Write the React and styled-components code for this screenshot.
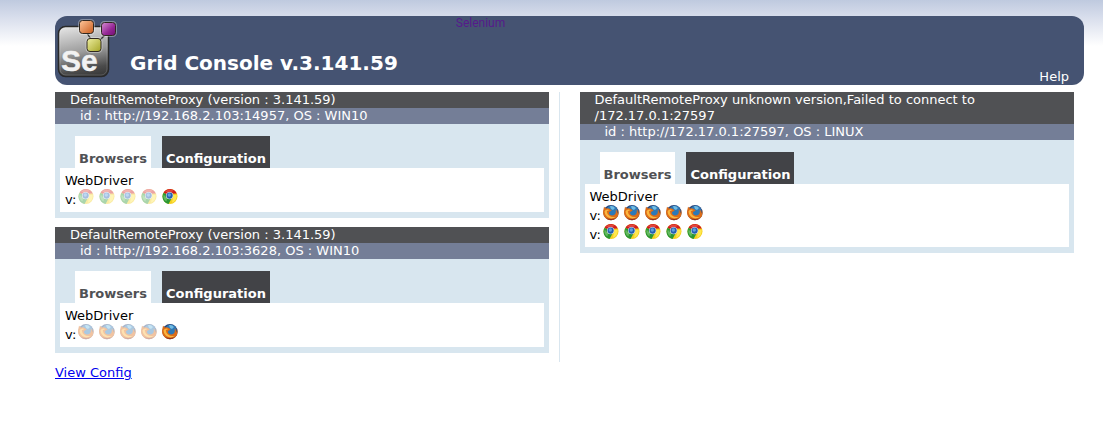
import React from "react";
import styled, { createGlobalStyle, css } from "styled-components";

const GlobalStyle = createGlobalStyle`
  * { box-sizing: border-box; }
  body {
    margin: 0;
    color: #000;
    background: #fff linear-gradient(to bottom, #bfcadf 0, #d6dceb 16px, #fff 46px) no-repeat;
    font: 13px/16px Verdana, "DejaVu Sans", sans-serif;
  }
`;

const Page = styled.div`
  padding: 16px 19px 0 55px;
`;

const Header = styled.header`
  display: flex;
  align-items: flex-start;
  height: 69px;
  padding-right: 15px;
  border-radius: 12px;
  background: #455372;
  color: #fff;
`;

const Title = styled.h1`
  margin: 34px 0 0 13px;
  font-size: 20px;
  line-height: 26px;
  white-space: nowrap;
`;

const BrandLink = styled.a`
  margin-left: 58px;
  color: #551a8b;
  font: 12px/14px Roboto, sans-serif;
  text-decoration: none;
`;

const HelpLink = styled.a`
  align-self: flex-end;
  margin-left: auto;
  color: #fff;
  text-decoration: none;
`;

const Columns = styled.main`
  display: grid;
  grid-template-columns: 1fr 1fr;
  gap: 20px;
  margin-top: 7px;
`;

const Column = styled.div`
  padding-right: 10px;
  ${(p) => p.$divided && css`border-right: 1px solid #d9e6ef;`}
`;

const Proxy = styled.section`
  margin-bottom: 9px;
  padding-bottom: 6px;
  background: #d8e6ef;
`;

const ProxyName = styled.h2`
  margin: 0;
  padding: 0 15px;
  background: #505154;
  color: #fff;
  font-size: 13px;
  font-weight: normal;
`;

const ProxyId = styled.p`
  margin: 0;
  padding: 0 25px;
  background: #747e97;
  color: #fff;
`;

const Tabs = styled.div`
  display: flex;
  gap: 11px;
  padding: 12px 20px 0;
`;

const Tab = styled.button`
  height: 32px;
  padding: 14px 4px 0;
  border: 0;
  background: ${(p) => (p.$active ? "#fff" : "#424347")};
  color: ${(p) => (p.$active ? "#505154" : "#fff")};
  font: bold 13px/16px Verdana, "DejaVu Sans", sans-serif;
`;

const Panel = styled.div`
  margin: 0 5px;
  padding: 4px 5px;
  background: #fff;
`;

const Protocol = styled.p`
  margin: 0;
  line-height: 17px;
`;

const Slots = styled.div`
  display: flex;
  gap: 5px;
  height: 19px;
`;

const Version = styled.span`
  margin-right: -3px;
  padding-top: 3px;
`;

const Icon = styled.svg`
  flex: none;
  width: 16px;
  height: 16px;
  opacity: ${(p) => (p.$busy ? 0.4 : 1)};
`;

const Logo = styled.svg`
  flex: none;
  width: 62px;
  height: 62px;
`;

const ConfigLink = styled.a`
  display: inline-block;
  margin-top: 3px;
  color: #0000ee;
`;

function SeleniumLogo() {
  return (
    <Logo viewBox="0 0 62 62" aria-hidden="true">
      <defs>
        <linearGradient id="tile" x1="0.4" y1="0" x2="0.6" y2="1">
          <stop offset="0" stopColor="#dedede" />
          <stop offset="0.5" stopColor="#9b9b9b" />
          <stop offset="0.85" stopColor="#4b4b4b" />
          <stop offset="1" stopColor="#3a3a3a" />
        </linearGradient>
        <linearGradient id="orange" x1="0" y1="0" x2="1" y2="1">
          <stop offset="0" stopColor="#ffc79b" />
          <stop offset="1" stopColor="#c85b1c" />
        </linearGradient>
        <linearGradient id="purple" x1="0" y1="0" x2="1" y2="1">
          <stop offset="0" stopColor="#d691d4" />
          <stop offset="0.6" stopColor="#942594" />
          <stop offset="1" stopColor="#701070" />
        </linearGradient>
        <linearGradient id="yellow" x1="0" y1="0" x2="1" y2="1">
          <stop offset="0" stopColor="#eeeea0" />
          <stop offset="1" stopColor="#a5a526" />
        </linearGradient>
      </defs>
      <rect x="3.5" y="10.5" width="50" height="50" rx="7" fill="url(#tile)" stroke="#292929" strokeWidth="1.5" />
      <rect x="5" y="12" width="47" height="47" rx="6" fill="none" stroke="#fff" strokeOpacity="0.15" />
      <path d="M32 17l5 8M51 18l-7 7" fill="none" stroke="#333" strokeWidth="1.4" />
      <text x="6" y="54.5" fill="#f2f2f2" stroke="#f2f2f2" strokeWidth="0.4" fontFamily="Liberation Sans, Arial, sans-serif" fontWeight="bold" fontSize="30">Se</text>
      <g stroke="#fff" strokeOpacity="0.35" strokeWidth="3" fill="none">
        <rect x="24.5" y="4.5" width="14" height="13" rx="3" />
        <rect x="46.5" y="6.5" width="14" height="13" rx="3" />
        <rect x="32" y="22.5" width="14" height="13" rx="3" />
      </g>
      <g stroke="#302820">
        <rect x="24.5" y="4.5" width="14" height="13" rx="3" fill="url(#orange)" />
        <rect x="46.5" y="6.5" width="14" height="13" rx="3" fill="url(#purple)" />
        <rect x="32" y="22.5" width="14" height="13" rx="3" fill="url(#yellow)" />
      </g>
    </Logo>
  );
}

function ChromeIcon({ busy }) {
  return (
    <Icon viewBox="0 0 16 16" $busy={busy} role="img" aria-label="chrome">
      <circle cx="8" cy="7.5" r="7.5" fill="#f5cf20" />
      <path d="M7.500 7L1.500 3.700A7.500 7.500 0 0 1 14.800 4.600L8 4.800Z" fill="#cf1b1b" />
      <path d="M3 3A6 6 0 0 1 12 2L8 3.200Z" fill="#ec6259" opacity="0.6" />
      <path d="M7.500 7L1.500 3.700A7.500 7.500 0 0 0 6.600 14.900L9.500 9.500Z" fill="#2b9732" />
      <path d="M1.600 5.500A6.500 6.500 0 0 0 4.500 12.500L5 9Z" fill="#8bd07c" opacity="0.6" />
      <path d="M11.500 6L14.600 6A7 7 0 0 1 10 13.800Z" fill="#ffe84e" />
      <circle cx="7.600" cy="6.600" r="3.700" fill="#dfe7ee" />
      <circle cx="7.600" cy="6.600" r="3.100" fill="#235fae" />
      <circle cx="7.300" cy="6" r="1.700" fill="#5da0df" />
    </Icon>
  );
}

function FirefoxIcon({ busy }) {
  return (
    <Icon viewBox="0 0 16 16" $busy={busy} role="img" aria-label="firefox">
      <circle cx="8" cy="7.700" r="7.600" fill="#2a4478" />
      <circle cx="8.800" cy="6" r="5.500" fill="#2c79b8" />
      <path d="M7 1.200Q10 .6 12 3L10 5L8 4Z" fill="#72bce2" />
      <path d="M1 1.800L3 3.500Q5 2.900 6.800 4.100L8.700 5.500L6.200 6.900Q5.500 8.800 7.200 10Q9.500 11.200 11.800 9.500Q13.500 7.800 12.500 4.300Q14.500 6 14.100 8.500Q15 7 14.800 4.200Q17 9.800 13.200 13.300Q8.500 16.900 3.700 13.900Q-1 10.500 .3 5.300Z" fill="#dc6c18" />
      <path d="M1.500 6.500Q2 11 5.800 12.800Q9.500 14.400 13 11.700Q9 12.900 6 10.400Q4 8.700 3.800 6.200L6.500 5Q3 3.500 1.500 6.500Z" fill="#fbb63e" />
      <path d="M3 13.200Q8 16.700 13 13.200Q8 14.700 3 13.200Z" fill="#8a2b1c" />
    </Icon>
  );
}

const icons = { chrome: ChromeIcon, firefox: FirefoxIcon };

function SlotRow({ browser, busy }) {
  const BrowserIcon = icons[browser];
  return (
    <Slots>
      <Version>v:</Version>
      {[0, 1, 2, 3, 4].map((slot) => (
        <BrowserIcon key={slot} busy={slot < busy} />
      ))}
    </Slots>
  );
}

function ProxyCard({ name, id, rows }) {
  return (
    <Proxy>
      <ProxyName>{name}</ProxyName>
      <ProxyId>{id}</ProxyId>
      <Tabs role="tablist">
        <Tab type="button" role="tab" aria-selected="true" $active>Browsers</Tab>
        <Tab type="button" role="tab" aria-selected="false">Configuration</Tab>
      </Tabs>
      <Panel role="tabpanel">
        <Protocol>WebDriver</Protocol>
        {rows.map((row) => (
          <SlotRow key={row.browser} {...row} />
        ))}
      </Panel>
    </Proxy>
  );
}

export default function App() {
  return (
    <>
      <GlobalStyle />
      <Page>
        <Header>
          <SeleniumLogo />
          <Title>Grid Console v.3.141.59</Title>
          <BrandLink href="#selenium">Selenium</BrandLink>
          <HelpLink href="#help">Help</HelpLink>
        </Header>
        <Columns>
          <Column $divided>
            <ProxyCard
              name="DefaultRemoteProxy (version : 3.141.59)"
              id="id : http://192.168.2.103:14957, OS : WIN10"
              rows={[{ browser: "chrome", busy: 4 }]}
            />
            <ProxyCard
              name="DefaultRemoteProxy (version : 3.141.59)"
              id="id : http://192.168.2.103:3628, OS : WIN10"
              rows={[{ browser: "firefox", busy: 4 }]}
            />
          </Column>
          <Column>
            <ProxyCard
              name="DefaultRemoteProxy unknown version,Failed to connect to /172.17.0.1:27597"
              id="id : http://172.17.0.1:27597, OS : LINUX"
              rows={[
                { browser: "firefox", busy: 0 },
                { browser: "chrome", busy: 0 },
              ]}
            />
          </Column>
        </Columns>
        <ConfigLink href="#config">View Config</ConfigLink>
      </Page>
    </>
  );
}
